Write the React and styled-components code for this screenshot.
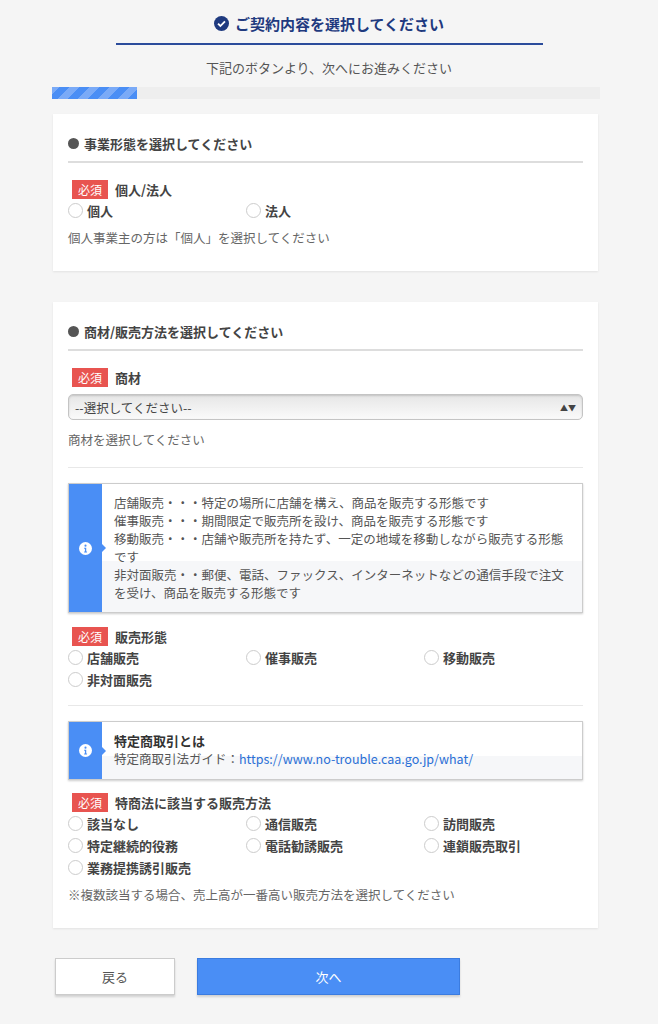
import React from 'react';
import styled, { createGlobalStyle } from 'styled-components';

const GlobalStyle = createGlobalStyle`
  html, body { margin: 0; background: #f5f5f5; }
  body { font-family: "Noto Sans CJK JP", "Noto Sans", sans-serif; color: #444; }
`;

const Page = styled.div`
  width: 658px;
  padding: 4px 0 24px;
  box-sizing: border-box;
`;

const Title = styled.h1`
  margin: 0 auto;
  width: 427px;
  height: 39px;
  display: flex;
  align-items: center;
  justify-content: center;
  gap: 6px;
  font-size: 15px;
  font-weight: bold;
  color: #1f3a7f;
  border-bottom: 2px solid #2b4c9b;
`;

const Lead = styled.p`
  margin: 13px 0 0;
  text-align: center;
  font-size: 13px;
  color: #555;
`;

const Progress = styled.div`
  margin: 10px 58px 0 52px;
  height: 12px;
  background: #eeeeee;
`;

const ProgressFill = styled.div`
  width: 85px;
  height: 100%;
  background: repeating-linear-gradient(
    -45deg,
    #4a8ef5 0 7px,
    #7aaaf7 7px 14px
  );
`;

const Card = styled.section`
  margin: ${p => p.$top}px 60px 0 53px;
  background: #fff;
  padding: 20px 15px 24px;
  box-shadow: 0 1px 2px rgba(0, 0, 0, 0.08);
`;

const Heading = styled.h2`
  margin: 0;
  padding: 0 0 8px 0;
  font-size: 13px;
  font-weight: bold;
  color: #444;
  border-bottom: 2px solid #ddd;
  display: flex;
  align-items: center;
  gap: 5px;
  &::before {
    content: '';
    width: 11px;
    height: 11px;
    border-radius: 50%;
    background: #555;
  }
`;

const LabelRow = styled.div`
  margin-top: ${p => p.$top ?? 17}px;
  margin-left: 4px;
  display: flex;
  align-items: center;
  gap: 7px;
  font-size: 13px;
  font-weight: bold;
  color: #444;
`;

const Badge = styled.span`
  background: #e85450;
  color: #fff;
  font-size: 12px;
  font-weight: normal;
  padding: 0 6px;
  line-height: 19px;
`;

const Options = styled.div`
  display: grid;
  grid-template-columns: repeat(3, 178px);
  row-gap: 6px;
  margin-top: 3px;
  &.two { grid-template-columns: 178px 178px; }
`;

const Option = styled.label`
  display: flex;
  align-items: center;
  gap: 4px;
  font-size: 13px;
  font-weight: bold;
  color: #444;
  height: 16px;
`;

const Radio = styled.span`
  width: 15px;
  height: 15px;
  border-radius: 50%;
  border: 1px solid #ccc;
  background: #fff;
  box-sizing: border-box;
`;

const Hint = styled.p`
  margin: 10px 0 0;
  font-size: 12.5px;
  color: #666;
`;

const Select = styled.div`
  margin-top: 7px;
  height: 24px;
  border: 1px solid #c4c4c4;
  border-radius: 5px;
  background: linear-gradient(#e6e6e6, #fafafa);
  box-shadow: inset 0 1px 2px rgba(0, 0, 0, 0.15);
  display: flex;
  align-items: center;
  justify-content: space-between;
  padding: 0 6px;
  font-size: 12.5px;
  color: #444;
`;

const Divider = styled.hr`
  margin: 18px 0 15px;
  border: 0;
  border-top: 1px solid #e8e8e8;
`;

const InfoBox = styled.div`
  display: flex;
  border: 1px solid #ccc;
  box-shadow: 0 1px 2px rgba(0, 0, 0, 0.2);
  background: #fff;
`;

const InfoSide = styled.div`
  position: relative;
  width: 33px;
  flex-shrink: 0;
  background: #4a8ef5;
  display: flex;
  align-items: center;
  justify-content: center;
  &::after {
    content: '';
    position: absolute;
    right: -4px;
    top: 50%;
    margin-top: -4px;
    border-left: 4px solid #4a8ef5;
    border-top: 4px solid transparent;
    border-bottom: 4px solid transparent;
  }
`;

const InfoBody = styled.div`
  padding: ${p => p.$pad || '10px 10px 10px 12px'};
  font-size: 12.5px;
  line-height: 18px;
  color: #555;
  background: linear-gradient(#fff 60%, #f6f7f9 60%);
  flex: 1;
  strong { color: #333; font-size: 13px; }
  a { color: #2a6fd6; text-decoration: none; }
`;

const Buttons = styled.div`
  margin: 30px 0 0 55px;
  display: flex;
  gap: 22px;
`;

const Button = styled.button`
  height: 37px;
  width: ${p => p.$w}px;
  font-family: inherit;
  font-size: 13px;
  border: 1px solid ${p => (p.$primary ? '#3b7ce0' : '#ccc')};
  background: ${p => (p.$primary ? '#4a8ef5' : '#fff')};
  color: ${p => (p.$primary ? '#fff' : '#555')};
  box-shadow: 0 2px 2px rgba(0, 0, 0, 0.15);
`;

const InfoIcon = () => (
  <svg width="13" height="13" viewBox="0 0 16 16">
    <circle cx="8" cy="8" r="8" fill="#fff" />
    <circle cx="8" cy="4.5" r="1.3" fill="#4a8ef5" />
    <path d="M6.3 7h2.6v4.6h1v1.2H6.3v-1.2h1V8.2h-1z" fill="#4a8ef5" />
  </svg>
);

const CheckIcon = () => (
  <svg width="15" height="15" viewBox="0 0 16 16">
    <circle cx="8" cy="8" r="8" fill="#1f3a7f" />
    <path d="M4.3 8.2l2.5 2.5 4.9-5" stroke="#fff" strokeWidth="2" fill="none" />
  </svg>
);

const Choice = ({ children }) => (
  <Option>
    <Radio />
    {children}
  </Option>
);

export default function App() {
  return (
    <Page>
      <GlobalStyle />
      <Title>
        <CheckIcon />
        ご契約内容を選択してください
      </Title>
      <Lead>下記のボタンより、次へにお進みください</Lead>
      <Progress>
        <ProgressFill />
      </Progress>

      <Card $top={15}>
        <Heading>事業形態を選択してください</Heading>
        <LabelRow>
          <Badge>必須</Badge>個人/法人
        </LabelRow>
        <Options className="two">
          <Choice>個人</Choice>
          <Choice>法人</Choice>
        </Options>
        <Hint>個人事業主の方は「個人」を選択してください</Hint>
      </Card>

      <Card $top={31}>
        <Heading>商材/販売方法を選択してください</Heading>
        <LabelRow>
          <Badge>必須</Badge>商材
        </LabelRow>
        <Select>
          <span>--選択してください--</span>
          <span style={{ fontSize: 8 }}>▲▼</span>
        </Select>
        <Hint>商材を選択してください</Hint>
        <Divider />
        <InfoBox>
          <InfoSide>
            <InfoIcon />
          </InfoSide>
          <InfoBody>
            店舗販売・・・特定の場所に店舗を構え、商品を販売する形態です<br />
            催事販売・・・期間限定で販売所を設け、商品を販売する形態です<br />
            移動販売・・・店舗や販売所を持たず、一定の地域を移動しながら販売する形態です<br />
            非対面販売・・郵便、電話、ファックス、インターネットなどの通信手段で注文を受け、商品を販売する形態です
          </InfoBody>
        </InfoBox>
        <LabelRow $top={14}>
          <Badge>必須</Badge>販売形態
        </LabelRow>
        <Options>
          <Choice>店舗販売</Choice>
          <Choice>催事販売</Choice>
          <Choice>移動販売</Choice>
          <Choice>非対面販売</Choice>
        </Options>
        <Divider />
        <InfoBox>
          <InfoSide>
            <InfoIcon />
          </InfoSide>
          <InfoBody $pad="10px 10px 11px 12px">
            <strong>特定商取引とは</strong>
            <br />
            特定商取引法ガイド：
            <a href="#">https://www.no-trouble.caa.go.jp/what/</a>
          </InfoBody>
        </InfoBox>
        <LabelRow $top={13}>
          <Badge>必須</Badge>特商法に該当する販売方法
        </LabelRow>
        <Options>
          <Choice>該当なし</Choice>
          <Choice>通信販売</Choice>
          <Choice>訪問販売</Choice>
          <Choice>特定継続的役務</Choice>
          <Choice>電話勧誘販売</Choice>
          <Choice>連鎖販売取引</Choice>
          <Choice>業務提携誘引販売</Choice>
        </Options>
        <Hint>※複数該当する場合、売上高が一番高い販売方法を選択してください</Hint>
      </Card>

      <Buttons>
        <Button $w={120}>戻る</Button>
        <Button $w={263} $primary>
          次へ
        </Button>
      </Buttons>
    </Page>
  );
}
